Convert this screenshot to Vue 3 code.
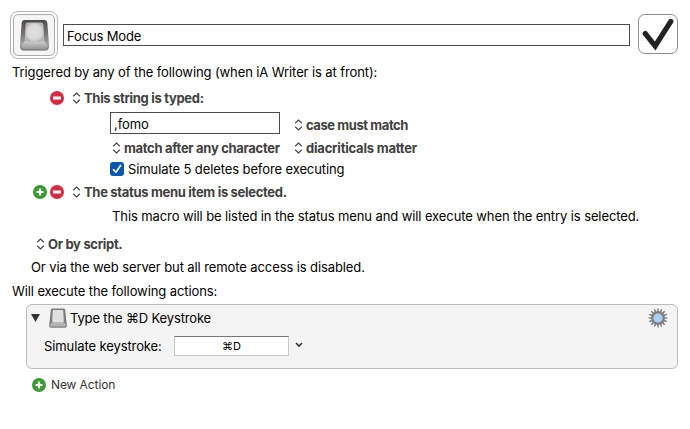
<template>
  <div class="macro-editor">
    <svg class="defs" width="0" height="0">
      <defs>
        <linearGradient id="keySide" x1="0" y1="0" x2="0" y2="1">
          <stop offset="0" stop-color="#4c4947"/>
          <stop offset="0.55" stop-color="#83807e"/>
          <stop offset="0.8" stop-color="#a5a5a5"/>
          <stop offset="1" stop-color="#666"/>
        </linearGradient>
        <radialGradient id="keyTop">
          <stop offset="0" stop-color="#e2e2e2"/>
          <stop offset="0.8" stop-color="#d6d6d6"/>
          <stop offset="1" stop-color="#b8b8b8"/>
        </radialGradient>
        <linearGradient id="keyFront" x1="0" y1="0" x2="0" y2="1">
          <stop offset="0" stop-color="#d2d2d2"/>
          <stop offset="1" stop-color="#939393"/>
        </linearGradient>
        <symbol id="key" viewBox="0 0 32 34">
          <path d="M6 1.5H26Q29 1.5 29.3 5L31 27Q31.5 33 27 33H5Q.5 33 1 27L2.7 5Q3 1.5 6 1.5Z" fill="url(#keySide)"/>
          <path d="M6 23H26L29.5 28Q29.5 32 26 32H6Q2.5 32 2.5 28Z" fill="url(#keyFront)"/>
          <path d="M9.5 4H22.5Q25 4 25.2 6.5L26 20.5Q26 24 23 24H9Q6 24 6 20.5L6.8 6.5Q7 4 9.5 4Z" fill="url(#keyTop)"/>
        </symbol>
        <symbol id="smallKey" viewBox="0 0 18 20">
          <path d="M3 .5H15Q16 .5 16.2 2L17.8 17Q18 19.8 16 19.8H2Q0 19.8 .2 17L1.8 2Q2 .5 3 .5Z" fill="#7c7c7c"/>
          <path d="M2.5 14.5H15.5L17 17Q17 18.5 15.5 18.5H2.5Q1 18.5 1 17Z" fill="#b4b4b4"/>
          <path d="M4.8 2H13.2Q14.2 2 14.3 3.3L14.8 13Q14.8 14.5 13.3 14.5H4.7Q3.2 14.5 3.2 13L3.7 3.3Q3.8 2 4.8 2Z" fill="#e0e0e0"/>
        </symbol>
        <symbol id="updown" viewBox="0 0 9 12">
          <path d="M1.2 4.2 4.5 1.1 7.8 4.2M1.2 7.8 4.5 10.9 7.8 7.8" fill="none" stroke="#444" stroke-width="1.2"/>
        </symbol>
        <symbol id="add" viewBox="0 0 14 14">
          <circle cx="7" cy="7" r="7" fill="#3b9a33"/>
          <path d="M7 3.5V10.5M3.5 7H10.5" stroke="#fff" stroke-width="2.2"/>
        </symbol>
        <symbol id="remove" viewBox="0 0 14 14">
          <circle cx="7" cy="7" r="7" fill="#d62b45"/>
          <rect x="3" y="5.5" width="8" height="3" fill="#fff"/>
        </symbol>
      </defs>
    </svg>

    <header class="header">
      <div class="icon-well">
        <div class="icon-inner">
          <svg width="31" height="34"><use href="#key"/></svg>
        </div>
      </div>
      <div class="name-field">{{ macro.name }}</div>
      <div class="enabled">
        <svg width="40" height="40" viewBox="0 0 40 40">
          <path d="M7.3 19.6 17.2 32 32.8 7.4" fill="none" stroke="#222" stroke-width="5.2" stroke-linecap="round" stroke-linejoin="miter"/>
        </svg>
      </div>
    </header>

    <div class="row heading triggered">Triggered by any of the following (when iA Writer is at front):</div>

    <div class="row trigger first">
      <svg class="round" width="14" height="14"><use href="#remove"/></svg>
      <svg class="arrows" width="9" height="12"><use href="#updown"/></svg>
      <span class="popup typed">This string is typed:</span>
    </div>

    <div class="options">
      <div class="string-field">{{ macro.typed }}</div>
      <div class="option case">
        <svg width="9" height="12"><use href="#updown"/></svg>
        <span class="popup">case must match</span>
      </div>
      <div class="option left">
        <svg width="9" height="12"><use href="#updown"/></svg>
        <span class="popup">match after any character</span>
      </div>
      <div class="option">
        <svg width="9" height="12"><use href="#updown"/></svg>
        <span class="popup diacriticals">diacriticals matter</span>
      </div>
    </div>

    <div class="row simulate">
      <span class="checkbox">
        <svg width="14" height="14" viewBox="0 0 14 14">
          <path d="M3.5 7.6 5.9 10.3 10.6 3.5" fill="none" stroke="#fff" stroke-width="1.7" stroke-linecap="round" stroke-linejoin="round"/>
        </svg>
      </span>
      <span class="deletes">Simulate 5 deletes before executing</span>
    </div>

    <div class="row trigger second">
      <svg class="round add" width="14" height="14"><use href="#add"/></svg>
      <svg class="round" width="14" height="14"><use href="#remove"/></svg>
      <svg class="arrows" width="9" height="12"><use href="#updown"/></svg>
      <span class="popup">The status menu item is selected.</span>
    </div>

    <div class="row note">This macro will be listed in the status menu and will execute when the entry is selected.</div>

    <div class="row script">
      <svg width="9" height="12"><use href="#updown"/></svg>
      <span class="popup">Or by script.</span>
    </div>
    <div class="row web">Or via the web server but all remote access is disabled.</div>
    <div class="row heading execute">Will execute the following actions:</div>

    <section class="action">
      <div class="action-head">
        <svg class="disclosure" width="9" height="8"><path d="M0 0H9L4.5 8Z" fill="#333"/></svg>
        <svg class="small-key" width="18" height="20"><use href="#smallKey"/></svg>
        <span class="action-title">Type the <Cmd />D Keystroke</span>
        <svg class="gear" width="20" height="20" viewBox="-10 -10 20 20">
          <path
            v-for="n in 16"
            :key="n"
            d="M-.8-6.5-.6-9.5H.6L.8-6.5Z"
            fill="#777"
            :transform="`rotate(${n * 22.5})`"
          />
          <circle r="5.8" fill="#acd0f3" stroke="#808080" stroke-width="2.4"/>
        </svg>
      </div>
      <div class="action-body">
        <span class="keystroke-label">Simulate keystroke:</span>
        <div class="keystroke-field"><Cmd />D</div>
        <svg class="chevron" width="8" height="6"><path d="M1 1 4 4 7 1" fill="none" stroke="#333" stroke-width="1.6"/></svg>
      </div>
    </section>

    <div class="row new-action">
      <svg width="14" height="14"><use href="#add"/></svg>
      <span>New Action</span>
    </div>
  </div>
</template>

<script setup>
import { h, reactive } from 'vue'

const macro = reactive({
  name: 'Focus Mode',
  typed: ',fomo'
})

const Cmd = () => h('span', '⌘')
</script>

<style>
body {
  margin: 0;
  background: #fff;
}
</style>

<style scoped>
.macro-editor {
  width: 690px;
  height: 429px;
  overflow: hidden;
  box-sizing: border-box;
  padding-top: 11px;
  background: #fff;
  color: #000;
  font-family: Inter, 'DejaVu Sans', sans-serif;
  font-size: 13px;
  line-height: 20px;
  letter-spacing: -0.1px;
  white-space: nowrap;
}

.macro-editor * {
  box-sizing: border-box;
}

svg {
  display: block;
  flex-shrink: 0;
}

.defs {
  position: absolute;
}

.header {
  display: flex;
  height: 50px;
  padding-left: 10px;
}

.icon-well {
  width: 48px;
  height: 48px;
  padding: 2px;
  border: 1px solid #b5b5b5;
  border-radius: 8px;
}

.icon-inner {
  display: flex;
  align-items: center;
  justify-content: center;
  width: 42px;
  height: 42px;
  border: 1px solid #aaa;
  border-radius: 5px;
  background: #f5f5f5;
}

.name-field {
  width: 567px;
  height: 22px;
  margin: 13px 8px 0 5px;
  padding: 1px 3px;
  border: 1px solid #4b4b4b;
  letter-spacing: -0.15px;
}

.enabled {
  width: 40px;
  height: 40px;
  margin-top: 3px;
  border: 1px solid #8e8e8e;
  border-radius: 7px;
}

.enabled svg {
  margin: -1px;
}

.row {
  display: flex;
  align-items: center;
  height: 20px;
}

.heading {
  padding-left: 12px;
}

.triggered {
  margin-top: 1px;
}

.popup {
  color: #404040;
  font-weight: 700;
  letter-spacing: -0.31px;
}

.diacriticals {
  letter-spacing: -0.2px;
}

.case .popup {
  letter-spacing: -0.42px;
}

.first {
  margin-top: 6px;
  padding-left: 50px;
}

.arrows {
  margin: 0 3px 0 8px;
}

.options {
  display: grid;
  grid-template-columns: 170px auto;
  grid-template-rows: 22px 20px;
  row-gap: 4px;
  column-gap: 14px;
  margin: 4px 0 0 110px;
}

.string-field {
  padding: 1px 3px;
  border: 1px solid #4b4b4b;
}

.option {
  display: flex;
  align-items: center;
  gap: 3px;
}

.case {
  padding-top: 4px;
}

.left {
  padding-left: 2px;
}

.simulate {
  margin-top: 1px;
  padding-left: 110px;
  gap: 4px;
}

.checkbox {
  width: 14px;
  height: 14px;
  border-radius: 3px;
  background: #0756b0;
}

.second {
  margin-top: 3px;
  padding-left: 33px;
}

.add {
  margin-right: 3px;
}

.note {
  margin-top: 4px;
  padding-left: 112px;
}

.script {
  gap: 3px;
  margin-top: 8px;
  padding-left: 36px;
}

.web {
  margin-top: 3px;
  padding-left: 31px;
}

.execute {
  margin-top: 4px;
}

.action {
  width: 652px;
  height: 65px;
  margin: 3px 0 0 26px;
  border: 1px solid #bdbdbd;
  border-radius: 6px;
  background: #f4f4f4;
}

.action-head {
  display: flex;
  align-items: center;
  height: 26px;
  padding: 0 9px 0 4px;
}

.small-key {
  margin: 0 3px 0 9px;
}

.action-title {
  letter-spacing: -0.15px;
}

.gear {
  margin: -1px 0 0 auto;
}

.action-body {
  display: flex;
  align-items: center;
  height: 30px;
  padding-left: 17px;
}

.keystroke-label {
  width: 130px;
}

.keystroke-field {
  width: 115px;
  height: 20px;
  border: 1px solid #c9c9c9;
  border-top-color: #777;
  background: #fff;
  font-size: 11px;
  line-height: 19px;
  text-align: center;
}

.chevron {
  margin: -2px 0 0 6px;
}

.new-action {
  gap: 5px;
  margin-top: 6px;
  padding-left: 32px;
  color: #333;
  font-size: 12px;
}
</style>
